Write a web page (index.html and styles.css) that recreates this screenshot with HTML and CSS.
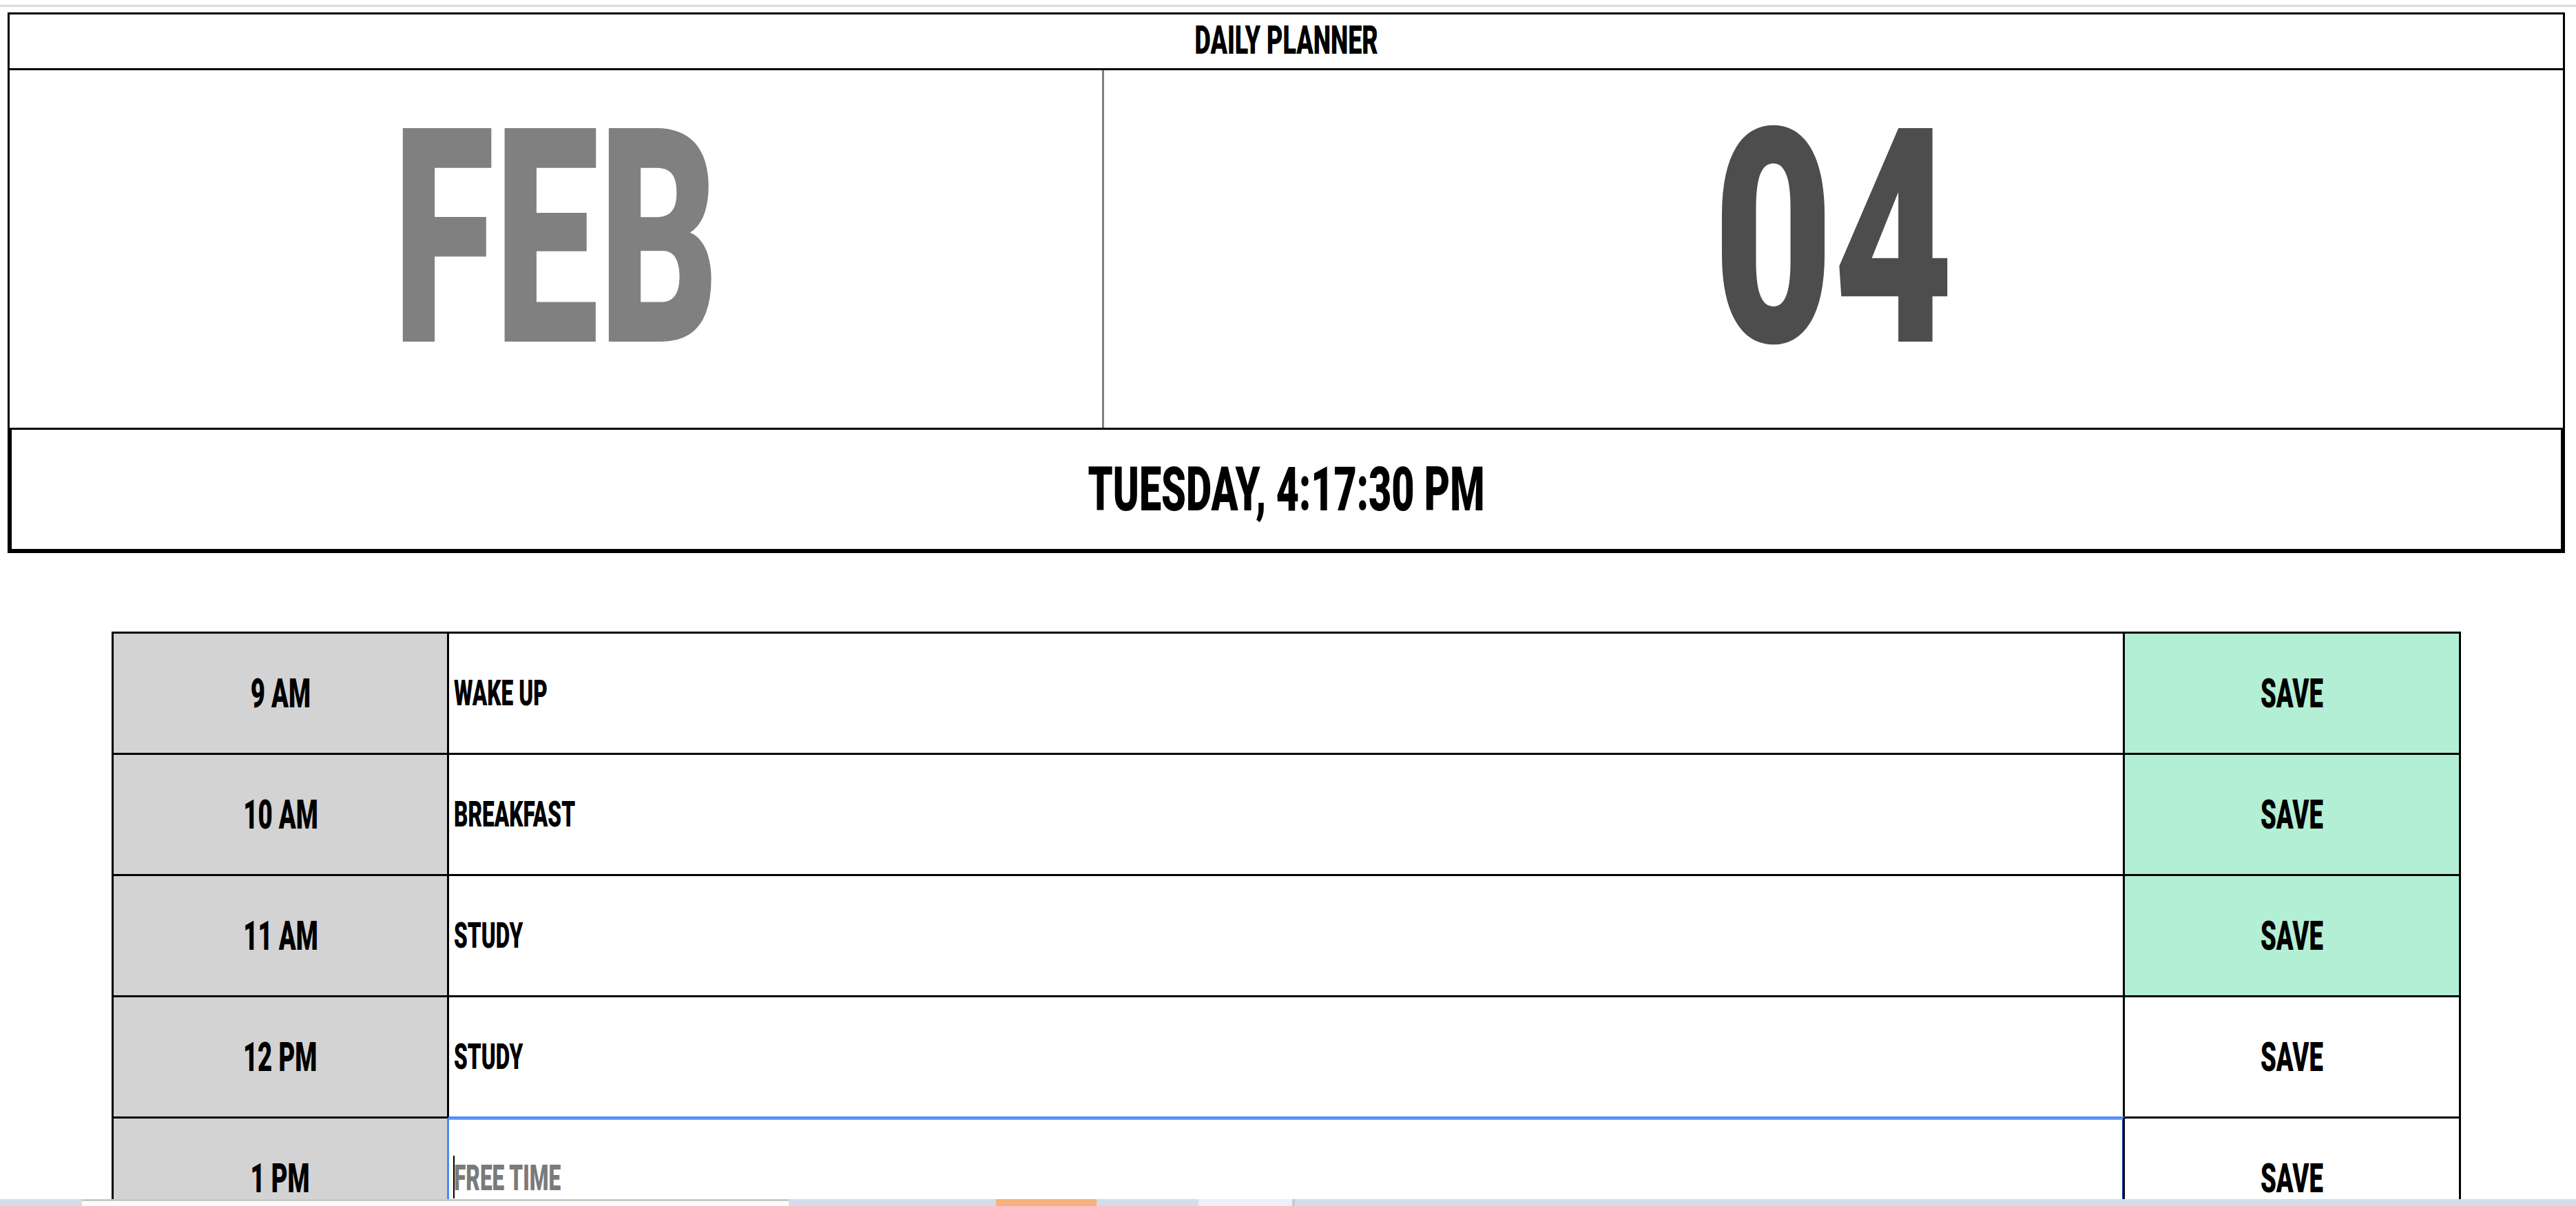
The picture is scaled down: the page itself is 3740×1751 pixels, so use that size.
FILE: index.html
```html
<!DOCTYPE html>
<html lang="en">
<head>
<meta charset="utf-8">
<title>Daily Planner</title>
<link rel="stylesheet" href="styles.css">
</head>
<body>
<div class="topline"></div>
<header class="planner-head">
  <div class="title"><span class="sq">DAILY PLANNER</span></div>
  <div class="date-row">
    <div class="month"><span class="sq">FEB</span></div>
    <div class="day"><span class="sq">04</span></div>
  </div>
  <div class="clock"><span class="sq">TUESDAY, 4:17:30 PM</span></div>
</header>

<main class="schedule">
  <div class="row">
    <div class="hour"><span class="sq">9 AM</span></div>
    <div class="desc"><span class="sq">WAKE UP</span></div>
    <div class="save done"><span class="sq">SAVE</span></div>
  </div>
  <div class="row">
    <div class="hour"><span class="sq">10 AM</span></div>
    <div class="desc"><span class="sq">BREAKFAST</span></div>
    <div class="save done"><span class="sq">SAVE</span></div>
  </div>
  <div class="row">
    <div class="hour"><span class="sq">11 AM</span></div>
    <div class="desc"><span class="sq">STUDY</span></div>
    <div class="save done"><span class="sq">SAVE</span></div>
  </div>
  <div class="row">
    <div class="hour"><span class="sq">12 PM</span></div>
    <div class="desc"><span class="sq">STUDY</span></div>
    <div class="save"><span class="sq">SAVE</span></div>
  </div>
  <div class="row focus">
    <div class="hour"><span class="sq">1 PM</span></div>
    <div class="desc"><span class="caret"></span><span class="sq placeholder">FREE TIME</span></div>
    <div class="save"><span class="sq">SAVE</span></div>
  </div>
</main>

<div class="taskbar">
  <div class="tb-gap tb-a"></div>
  <div class="tb-white"></div>
  <div class="tb-gap tb-b"></div>
  <div class="tb-orange"></div>
  <div class="tb-gap tb-c"></div>
  <div class="tb-light"></div>
  <div class="tb-sep"></div>
  <div class="tb-rest"></div>
</div>
</body>
</html>
```

FILE: styles.css
```css
html, body {
  margin: 0;
  padding: 0;
  overflow: hidden;
  background: #ffffff;
}

body {
  font-family: "Roboto", "Liberation Sans", sans-serif;
  font-weight: 900;
  color: #000000;
}

.sq {
  display: inline-block;
  white-space: nowrap;
  transform: scaleX(0.62);
  transform-origin: center center;
}

.topline {
  height: 3px;
  margin: 7px 0 8px;
  background: #dcdcdc;
}

.planner-head {
  margin: 0 16px 0 11px;
  border: 3px solid #000000;
}

.title {
  height: 73px;
  padding-bottom: 5px;
  border-bottom: 3px solid #000000;
  display: flex;
  align-items: center;
  justify-content: center;
  font-size: 58px;
  line-height: 1;
}

.date-row {
  display: grid;
  grid-template-columns: 3fr 4fr;
  height: 519px;
}

.month,
.day {
  display: flex;
  align-items: center;
  justify-content: center;
  font-size: 436px;
  line-height: 1;
  padding-bottom: 30px;
  box-sizing: border-box;
}

.month {
  color: #808080;
  border-right: 3px solid #808080;
}

.day {
  color: #4d4d4d;
}

.day .sq {
  transform: scaleX(0.69);
}

.clock {
  height: 173px;
  border: 3px solid #000000;
  display: flex;
  align-items: center;
  justify-content: center;
  font-size: 89px;
  line-height: 1;
}

.clock .sq {
  transform: scaleX(0.645);
}

.schedule {
  margin: 114px 167px 0 162px;
  border-left: 3px solid #000000;
  border-right: 3px solid #000000;
}

.row {
  display: grid;
  grid-template-columns: 487px 2433px 485px;
  height: 176px;
}

.hour,
.desc,
.save {
  box-sizing: border-box;
  border-top: 3px solid #000000;
  display: flex;
  align-items: center;
  line-height: 1;
}

.hour {
  background: #d3d3d3;
  border-right: 3px solid #000000;
  justify-content: center;
  font-size: 59px;
}

.desc {
  position: relative;
  background: #ffffff;
  border-right: 3px solid #000000;
  padding-left: 7px;
  font-size: 51px;
}

.desc .sq {
  transform-origin: left center;
}

.save {
  background: #ffffff;
  justify-content: center;
  font-size: 59px;
}

.save.done {
  background: #b2efd4;
}

.row.focus .hour {
  border-right-color: #4a8cf7;
}

.row.focus .desc {
  border-top-color: #4d8ff9;
  box-shadow: inset 0 2px 0 #6fa5fb, inset -1px 0 0 #1d4fc4;
}

.placeholder {
  color: #7a7a7a;
}

.caret {
  position: absolute;
  left: 6px;
  top: 54px;
  width: 2px;
  height: 62px;
  background: #000000;
}

.taskbar {
  position: fixed;
  left: 0;
  right: 0;
  bottom: 0;
  height: 10px;
  display: flex;
  background: #d5dcea;
}

.tb-a { width: 119px; }
.tb-b { width: 301px; }
.tb-c { width: 148px; }

.tb-white {
  width: 1026px;
  box-sizing: border-box;
  background: #ffffff;
  border-top: 3px solid #c9c9c9;
}

.tb-orange {
  width: 146px;
  background: #f6b27a;
}

.tb-light {
  width: 136px;
  background: #edf0f7;
}

.tb-sep {
  width: 4px;
  background: #c3cbdd;
}

.tb-rest {
  flex: 1;
}
```
